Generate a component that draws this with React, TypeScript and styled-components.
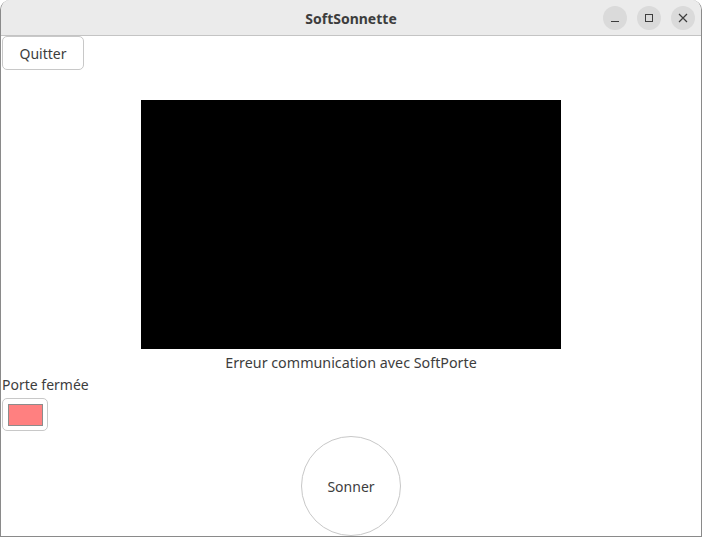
import React from "react";
import styled, { createGlobalStyle } from "styled-components";

const Global = createGlobalStyle`
  html, body { margin: 0; padding: 0; background: #ffffff; }
  body { width: 703px; height: 537px; overflow: hidden; font-family: "Noto Sans", "DejaVu Sans", sans-serif; }
`;

const Window = styled.div`
  width: 702px;
  height: 537px;
  box-sizing: border-box;
  border-left: 1px solid #8a8a8a;
  border-right: 1px solid #8a8a8a;
  border-bottom: 1px solid #8a8a8a;
  border-radius: 10px 10px 0 0;
  overflow: hidden;
  display: flex;
  flex-direction: column;
  background: #ffffff;
`;

const TitleBar = styled.div`
  height: 35px;
  flex: none;
  background: #ebebeb;
  border-bottom: 1px solid #c4c4c4;
  display: grid;
  grid-template-columns: 1fr auto 1fr;
  align-items: center;
`;

const Title = styled.div`
  grid-column: 2;
  font-weight: 700;
  font-size: 14px;
  color: #3d3d3d;
  padding-top: 1px;
`;

const Controls = styled.div`
  grid-column: 3;
  justify-self: end;
  display: flex;
  gap: 10px;
  padding-right: 6px;
`;

const Ctrl = styled.div`
  width: 24px;
  height: 24px;
  border-radius: 50%;
  background: #dadada;
  display: flex;
  align-items: center;
  justify-content: center;
`;

const Content = styled.div`
  flex: 1;
  display: flex;
  flex-direction: column;
  align-items: flex-start;
  padding: 0 0 0 1px;
  color: #3d3d3d;
  font-size: 14px;
`;

const Button = styled.button`
  font-family: inherit;
  font-size: 14px;
  color: #3d3d3d;
  background: #ffffff;
  border: 1px solid #c8c8c8;
  border-radius: 5px;
  padding: 0;
  cursor: pointer;
`;

const QuitButton = styled(Button)`
  width: 82px;
  height: 34px;
`;

const VideoBlock = styled.div`
  align-self: stretch;
  display: flex;
  flex-direction: column;
  align-items: center;
  margin-top: 30px;
  padding-right: 1px;
`;

const Video = styled.div`
  width: 420px;
  height: 249px;
  background: #000000;
`;

const Caption = styled.div`
  margin-top: 4px;
  line-height: 20px;
  font-size: 14.3px;
`;

const Label = styled.div`
  margin-top: 2px;
  line-height: 20px;
`;

const SwatchButton = styled(Button)`
  width: 46px;
  height: 33px;
  margin-top: 3px;
  display: flex;
  align-items: center;
  justify-content: center;
`;

const Swatch = styled.div<{ $color: string }>`
  width: 35px;
  height: 22px;
  box-sizing: border-box;
  background: ${(p) => p.$color};
  border: 1px solid #8c8c8c;
`;

const RingRow = styled.div`
  align-self: stretch;
  display: flex;
  justify-content: center;
  margin-top: 5px;
  padding-right: 1px;
`;

const RingButton = styled(Button)`
  width: 100px;
  height: 100px;
  border-radius: 50%;
  flex: none;
`;

export default function App() {
  return (
    <>
      <Global />
      <Window>
        <TitleBar>
          <Title>SoftSonnette</Title>
          <Controls>
            <Ctrl>
              <svg width="10" height="10" viewBox="0 0 10 10">
                <path d="M1 8.5h8" stroke="#3d3d3d" strokeWidth="1" />
              </svg>
            </Ctrl>
            <Ctrl>
              <svg width="10" height="10" viewBox="0 0 10 10">
                <rect x="1.5" y="1.5" width="7" height="7" fill="none" stroke="#3d3d3d" strokeWidth="1" />
              </svg>
            </Ctrl>
            <Ctrl>
              <svg width="10" height="10" viewBox="0 0 10 10">
                <path d="M1 1L9 9M9 1L1 9" stroke="#3d3d3d" strokeWidth="1.2" />
              </svg>
            </Ctrl>
          </Controls>
        </TitleBar>
        <Content>
          <QuitButton>Quitter</QuitButton>
          <VideoBlock>
            <Video />
            <Caption>Erreur communication avec SoftPorte</Caption>
          </VideoBlock>
          <Label>Porte fermée</Label>
          <SwatchButton>
            <Swatch $color="#ff8080" />
          </SwatchButton>
          <RingRow>
            <RingButton>Sonner</RingButton>
          </RingRow>
        </Content>
      </Window>
    </>
  );
}
